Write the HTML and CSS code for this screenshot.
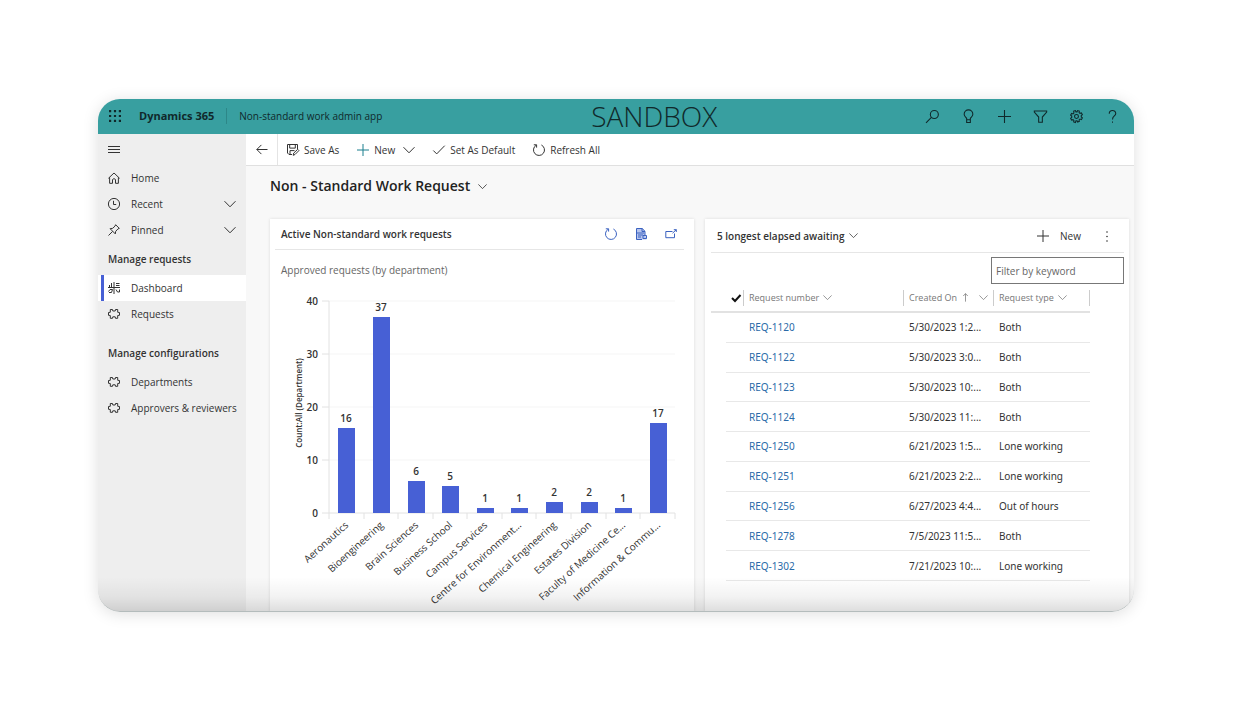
FILE: index.html
```html
<!DOCTYPE html>
<html lang="en">
<head>
    <meta charset="UTF-8">
    <meta name="viewport" content="width=device-width, initial-scale=1.0">
    <title>Non-standard work admin app - Dynamics 365</title>
    <link rel="stylesheet" href="styles.css">
</head>
<body>
    <!-- Shared icons -->
    <svg class="sprite" aria-hidden="true">
        <symbol id="chevron" viewBox="0 0 12 12"><path d="M.5 3.200 6 8.800l5.500-5.600"/></symbol>
        <symbol id="plus" viewBox="0 0 12 12"><path d="M6 0v12M0 6h12"/></symbol>
        <symbol id="refresh" viewBox="0 0 12 12"><path d="M3.200 1.200A5.500 5.500 0 1 0 8.400 1M.8.8h2.800v2.800"/></symbol>
        <symbol id="puzzle" viewBox="0 0 12 12"><path d="M2.300 1.500h2.200L4.800 3h2.400l.3-1.500h2.200v2.800l1.800.2v2.800l-1.800.2v2.800H7.500L7.200 8.800H4.800l-.3 1.500H2.300V7.500L.5 7.300V4.500l1.800-.2z"/></symbol>
    </svg>

    <div class="window">
        <header class="topbar">
            <button class="icon-btn" aria-label="App launcher">
                <svg class="icon solid" viewBox="0 0 12 12"><path d="M0 0h2.200v2.200H0zM4.900 0h2.200v2.200H4.900zM9.800 0H12v2.200H9.800zM0 4.900h2.200v2.200H0zM4.900 4.900h2.200v2.200H4.900zM9.800 4.900H12v2.200H9.800zM0 9.800h2.200V12H0zM4.900 9.800h2.200V12H4.900zM9.800 9.800H12V12H9.800z"/></svg>
            </button>
            <a class="brand" href="#">Dynamics 365</a>
            <a class="app-name" href="#">Non-standard work admin app</a>
            <span class="environment">SANDBOX</span>
            <div class="topbar-actions">
                <button class="icon-btn" aria-label="Search"><svg class="icon" viewBox="0 0 12 12"><circle cx="7.700" cy="4.200" r="3.700"/><path d="M5 6.900 0 11.800"/></svg></button>
                <button class="icon-btn" aria-label="Ideas"><svg class="icon" viewBox="0 0 12 12"><path d="M4.300 9V7.800C3.800 6.500 2 6 2 3.900a4 4 0 0 1 8 0C10 6 8.200 6.500 7.700 7.800V9zM4.300 9v2.500h3.400V9"/></svg></button>
                <button class="icon-btn" aria-label="Add"><svg class="icon"><use href="#plus"/></svg></button>
                <button class="icon-btn" aria-label="Filter"><svg class="icon" viewBox="0 0 12 12"><path d="M.3.900h11.400v1L7.700 6.500v4.800H4.300V6.500L.3 1.900z"/></svg></button>
                <button class="icon-btn" aria-label="Settings"><svg class="icon" viewBox="0 0 12 12"><path d="m5 .5.500 1.200h1L7 .5l1.600.5-.2 1.400.8.700 1.300-.4.900 1.500-1 .9v1.300l1 .9-.9 1.500-1.300-.4-.8.700.2 1.400-1.600.6-.5-1.200h-1L5 11.600 3.400 11l.2-1.400-.8-.7-1.300.4-.9-1.500 1-.9V5.600l-1-.9.900-1.500 1.300.4.800-.7L3.400 1z"/><circle cx="6" cy="6" r="1.800"/></svg></button>
                <button class="icon-btn" aria-label="Help"><svg class="icon" viewBox="0 0 12 12"><path d="M3 3.400C3-.4 9-.4 9 3.200 9 5.600 6 5.500 6 8.700M6 10.500v1.300"/></svg></button>
            </div>
        </header>

        <div class="body">
            <nav class="sidebar">
                <button class="menu-btn" aria-label="Site map"><svg class="icon" viewBox="0 0 12 12"><path d="M0 2.500h12M0 5.500h12M0 8.500h12"/></svg></button>
                <a class="nav-item" href="#"><svg class="icon" viewBox="0 0 12 12"><path d="M.4 6.300 6 1l5.600 5.300M1.600 5.300v6h2.900V7.500q1.500-1.800 3 0v3.800h2.900v-6"/></svg>Home</a>
                <button class="nav-item"><svg class="icon" viewBox="0 0 12 12"><circle cx="6" cy="6" r="5.600"/><path d="M5.500 2.800v3.700h2.700"/></svg>Recent<svg class="icon end"><use href="#chevron"/></svg></button>
                <button class="nav-item"><svg class="icon" viewBox="0 0 12 12"><path d="m7.600.7 3.700 3.700-1.300.5-2.300 2.400-.4 2.600-5.200-5.200 2.600-.4L7.100 2zM4.600 7.400.5 11.500"/></svg>Pinned<svg class="icon end"><use href="#chevron"/></svg></button>

                <h2>Manage requests</h2>
                <a class="nav-item active" href="#"><svg class="icon" viewBox="0 0 12 12"><path d="M6 0v12M0 5.500h12M1.500 5V3M3.500 5V1M8 1.500h3.500M8 3.500h3.500M.5 9.500 2 7.500h2.500l-1 3H1M8 7.500l1.500 2.500h2V7.500"/></svg>Dashboard</a>
                <a class="nav-item" href="#"><svg class="icon"><use href="#puzzle"/></svg>Requests</a>

                <h2 class="spaced">Manage configurations</h2>
                <a class="nav-item" href="#"><svg class="icon"><use href="#puzzle"/></svg>Departments</a>
                <a class="nav-item" href="#"><svg class="icon"><use href="#puzzle"/></svg>Approvers &amp; reviewers</a>
            </nav>

            <main>
                <div class="commands">
                    <button class="back" aria-label="Back"><svg class="icon" viewBox="0 0 12 12"><path d="M11.500 5.500H.8M5.400.9.800 5.500l4.600 4.600"/></svg></button>
                    <button><svg class="icon" viewBox="0 0 12 12"><path d="M5 10.500H2L.5 9V.5h10V5M2.700.5v3.600h5.600V.5M3 10.500V6.600h4.500M6.200 11.300l.5-2.200 4-3.800 1.200 1.300-3.900 3.900z"/></svg>Save As</button>
                    <button><svg class="icon teal"><use href="#plus"/></svg>New<svg class="icon menu"><use href="#chevron"/></svg></button>
                    <button><svg class="icon" viewBox="0 0 12 12"><path d="m.3 6.500 3.400 3.400 8-8.200"/></svg>Set As Default</button>
                    <button><svg class="icon"><use href="#refresh"/></svg>Refresh All</button>
                </div>

                <h1><button class="view-title">Non - Standard Work Request<svg class="icon small"><use href="#chevron"/></svg></button></h1>

                <div class="cards">
                    <section class="card">
                        <div class="card-head">
                            <h3>Active Non-standard work requests</h3>
                            <div class="card-actions">
                                <button class="icon-btn" aria-label="Refresh"><svg class="icon"><use href="#refresh"/></svg></button>
                                <button class="icon-btn" aria-label="View records"><svg class="icon" viewBox="0 0 12 12"><path class="tint" d="M1.500.5h5.700L10 3.300V8l1.500 1v2.500h-10z"/><path d="M7 11.500H1.500V.5h5.700L10 3.300v4M7 .5v3h3M2 5h7M3 7h5M3 9h3M8 7.500h3.500v3H8z"/></svg></button>
                                <button class="icon-btn" aria-label="Expand"><svg class="icon" viewBox="0 0 12 12"><path d="M7.500 3.500H.8v6.200h8.700V5.500M7.500 5.200l3.800-3.500M8.800 1.700h2.500v2.300"/></svg></button>
                            </div>
                        </div>
                        <p class="subtitle">Approved requests (by department)</p>
                        <svg class="chart" viewBox="0 0 424 327" role="img" aria-label="Approved requests by department">
                            <path class="grid" d="M59 16h346M59 69h346M59 122h346M59 175h346"/>
                            <path class="axis" d="M59 16v218M52 16h7M52 69h7M52 122h7M52 175h7M52 228h353M94 228v6M128 228v6M163 228v6M197 228v6M232 228v6M266 228v6M301 228v6M336 228v6M370 228v6M405 228v6"/>
                            <g class="tick-labels">
                                <text x="48" y="20">40</text>
                                <text x="48" y="73">30</text>
                                <text x="48" y="126">20</text>
                                <text x="48" y="179">10</text>
                                <text x="48" y="232">0</text>
                            </g>
                            <text class="axis-title" transform="translate(32 118) rotate(-90)">Count:All (Department)</text>
                            <g id="bars"></g>
                        </svg>
                    </section>

                    <section class="card">
                        <div class="card-head tall">
                            <h3><button class="view-picker">5 longest elapsed awaiting<svg class="icon small"><use href="#chevron"/></svg></button></h3>
                            <div class="card-actions dark">
                                <button class="new-btn"><svg class="icon"><use href="#plus"/></svg>New</button>
                                <button class="icon-btn" aria-label="More commands"><svg class="icon solid" viewBox="0 0 12 12"><circle cx="6" cy="2" r=".8"/><circle cx="6" cy="6.500" r=".8"/><circle cx="6" cy="11" r=".8"/></svg></button>
                            </div>
                        </div>
                        <input class="filter" type="text" placeholder="Filter by keyword" aria-label="Filter by keyword">
                        <table>
                            <colgroup><col class="c-edge"><col class="c-check"><col><col class="c-date"><col class="c-type"></colgroup>
                            <thead>
                                <tr>
                                    <th></th>
                                    <th><button aria-label="Select all"><svg class="icon check" viewBox="0 0 12 12"><path d="m2 6 3 3 5.500-6"/></svg></button></th>
                                    <th class="split"><button>Request number<svg class="icon small"><use href="#chevron"/></svg></button></th>
                                    <th class="split"><button>Created On<svg class="icon small" viewBox="0 0 12 12"><path d="M6 11.500V.8M3 4l3-3.200L9 4"/></svg><svg class="icon small last"><use href="#chevron"/></svg></button></th>
                                    <th class="split right"><button>Request type<svg class="icon small"><use href="#chevron"/></svg></button></th>
                                </tr>
                            </thead>
                            <tbody>
                                <tr><td></td><td></td><td><a href="#">REQ-1120</a></td><td>5/30/2023 1:2...</td><td>Both</td></tr>
                                <tr><td></td><td></td><td><a href="#">REQ-1122</a></td><td>5/30/2023 3:0...</td><td>Both</td></tr>
                                <tr><td></td><td></td><td><a href="#">REQ-1123</a></td><td>5/30/2023 10:...</td><td>Both</td></tr>
                                <tr><td></td><td></td><td><a href="#">REQ-1124</a></td><td>5/30/2023 11:...</td><td>Both</td></tr>
                                <tr><td></td><td></td><td><a href="#">REQ-1250</a></td><td>6/21/2023 1:5...</td><td>Lone working</td></tr>
                                <tr><td></td><td></td><td><a href="#">REQ-1251</a></td><td>6/21/2023 2:2...</td><td>Lone working</td></tr>
                                <tr><td></td><td></td><td><a href="#">REQ-1256</a></td><td>6/27/2023 4:4...</td><td>Out of hours</td></tr>
                                <tr><td></td><td></td><td><a href="#">REQ-1278</a></td><td>7/5/2023 11:5...</td><td>Both</td></tr>
                                <tr><td></td><td></td><td><a href="#">REQ-1302</a></td><td>7/21/2023 10:...</td><td>Lone working</td></tr>
                            </tbody>
                        </table>
                    </section>
                </div>
            </main>
        </div>
    </div>

    <script src="chart.js"></script>
</body>
</html>
```
FILE: styles.css
```css
* {
    margin: 0;
    padding: 0;
    box-sizing: border-box;
}

body {
    background: white;
    padding: 99px 99px 40px 98px;
    font-family: "Open Sans", "Noto Sans", sans-serif;
    font-size: 10px;
    line-height: 16px;
    color: #333;
}

button, input {
    font: inherit;
    color: inherit;
    background: none;
    border: none;
}

button {
    cursor: pointer;
}

a {
    color: inherit;
    text-decoration: none;
}

/* Icons */
.sprite {
    display: none;
}

.icon {
    width: 12px;
    height: 12px;
    flex: none;
    fill: none;
    stroke: currentColor;
    stroke-width: 1;
    overflow: visible;
}

.icon.small {
    width: 9px;
    height: 9px;
}

.icon.solid {
    fill: currentColor;
    stroke: none;
}

.teal {
    color: #1a7f8e;
}

.icon-btn {
    display: flex;
}

/* Window */
.window {
    position: relative;
    border-radius: 22px;
    overflow: hidden;
    background: #f8f8f8;
    box-shadow: 0 2px 16px rgba(0, 0, 0, 0.13);
}

.window::after {
    content: "";
    position: absolute;
    inset: 0;
    border-radius: 22px;
    border-bottom: 1px solid #b4bcbc;
    background: linear-gradient(to top, rgba(0, 0, 0, 0.13), rgba(0, 0, 0, 0.05) 14px, transparent 34px);
    pointer-events: none;
}

.topbar {
    display: flex;
    align-items: center;
    height: 35px;
    padding: 0 15px 1px 11px;
    background: #389fa0;
    color: #10292b;
}

.brand {
    margin-left: 18px;
    padding-right: 12px;
    border-right: 1px solid #2d8788;
    font-size: 11px;
    font-weight: 700;
}

.app-name {
    padding-left: 12px;
}

.environment {
    margin: 0 auto;
    font-size: 28px;
    font-weight: 300;
    line-height: 34px;
}

.topbar-actions {
    display: flex;
    gap: 23px;
}

.topbar-actions .icon {
    width: 13px;
    height: 13px;
}

.body {
    display: flex;
}

/* Sidebar */
.sidebar {
    width: 148px;
    flex: none;
    background: #eee;
}

.menu-btn {
    display: flex;
    padding: 10px 10px 9px;
}

.nav-item {
    display: flex;
    align-items: center;
    gap: 11px;
    width: 100%;
    height: 26px;
    padding: 0 10px;
    white-space: nowrap;
}

.end {
    margin-left: auto;
}

.nav-item.active {
    background: white;
    box-shadow: inset 3px 0 white, inset 6px 0 #4760d5;
}

.sidebar h2 {
    padding: 8px 10px;
    font-size: 10px;
    font-weight: 600;
}

.sidebar .spaced {
    margin-top: 10px;
}

/* Command bar */
main {
    flex: 1;
    min-width: 0;
}

.commands {
    display: flex;
    gap: 18px;
    height: 32px;
    padding-right: 20px;
    background: white;
    border-bottom: 1px solid #e0e0e0;
}

.commands button {
    display: flex;
    align-items: center;
    gap: 5px;
}

.commands .menu {
    margin-left: 3px;
}

.commands .back {
    width: 32px;
    justify-content: center;
    margin-right: -9px;
    border-right: 1px solid #e4e4e4;
}

h1 {
    padding: 9px 24px 22px;
}

.view-title {
    display: flex;
    align-items: center;
    gap: 8px;
    font-size: 14px;
    font-weight: 600;
    line-height: 22px;
    color: #222;
}

/* Cards */
.cards {
    display: grid;
    grid-template-columns: 1fr 1fr;
    gap: 11px;
    padding: 0 5px 0 24px;
}

.card {
    background: white;
    box-shadow: 0 0 3px rgba(0, 0, 0, 0.12);
}

.card-head {
    display: flex;
    align-items: center;
    justify-content: space-between;
    height: 31px;
    margin: 0 10px 0 5px;
    padding: 0 7px 0 6px;
    border-bottom: 1px solid #e6e6e6;
}

.card-head.tall {
    height: 34px;
    margin: 0 5px 0 6px;
    padding: 0 11px 0 6px;
}

h3 {
    font-size: 10px;
    font-weight: 600;
}

.card-actions {
    display: flex;
    align-items: center;
    gap: 18px;
    color: #3b62c0;
}

.card-actions.dark {
    gap: 20px;
    color: #333;
}

.tint {
    fill: #b7c5ee;
    stroke: none;
}

.view-picker,
.new-btn {
    display: flex;
    align-items: center;
    gap: 4px;
}

.new-btn {
    gap: 11px;
}

.subtitle {
    padding: 12px 11px 7px;
    color: #666;
}

/* Chart */
.chart {
    display: block;
    width: 100%;
}

.chart text {
    font-size: 10px;
    font-weight: 600;
    fill: #333;
}

.grid {
    stroke: #f5f5f5;
}

.axis {
    fill: none;
    stroke: #e2e2e2;
}

.tick-labels text {
    text-anchor: end;
}

.chart .axis-title,
.bar-value {
    text-anchor: middle;
}

.chart .axis-title {
    font-size: 8px;
}

.chart .bar-name {
    font-weight: 500;
    text-anchor: end;
}

.bar {
    fill: #4760d5;
}

/* Request grid */
.filter {
    display: block;
    width: 133px;
    height: 27px;
    margin: 4px 5px 0 auto;
    padding: 0 4px;
    border: 1px solid #777;
}

.filter::placeholder {
    color: #666;
    opacity: 1;
}

table {
    width: calc(100% - 45px);
    height: 297px;
    margin-left: 6px;
    table-layout: fixed;
    border-collapse: separate;
    border-spacing: 0;
}

.c-edge {
    width: 15px;
}

.c-check {
    width: 17px;
}

.c-date {
    width: 90px;
}

.c-type {
    width: 97px;
}

thead tr {
    height: 29px;
}

th {
    border-bottom: 2px solid #e2e2e2;
    font-size: 9px;
    font-weight: 400;
    color: #777;
}

th button {
    display: flex;
    align-items: center;
    gap: 4px;
    width: 100%;
    white-space: nowrap;
}

.split button {
    padding-left: 5px;
    border-left: 1px solid #ccc;
}

.right button {
    border-right: 1px solid #ccc;
}

.last {
    margin: 0 5px 0 auto;
}

.icon.check {
    margin-left: 4px;
    color: #111;
    stroke-width: 2;
}

td {
    padding-left: 6px;
    border-bottom: 1px solid #e8e8e8;
    font-family: "Noto Sans", "Open Sans", sans-serif;
    white-space: nowrap;
}

td:first-child {
    border-bottom: none;
}

td a {
    color: #2a6aa8;
}
```
FILE: chart.js
```js
const departments = [
    ['Aeronautics', 16],
    ['Bioengineering', 37],
    ['Brain Sciences', 6],
    ['Business School', 5],
    ['Campus Services', 1],
    ['Centre for Environment...', 1],
    ['Chemical Engineering', 2],
    ['Estates Division', 2],
    ['Faculty of Medicine Ce...', 1],
    ['Information & Commu...', 17]
];

const baseline = 228;
const unit = 5.3;
const step = 34.6;

function addShape(tag, attrs, text) {
    const el = document.createElementNS('http://www.w3.org/2000/svg', tag);
    for (const name in attrs) {
        el.setAttribute(name, attrs[name]);
    }
    if (text !== undefined) {
        el.textContent = text;
    }
    document.getElementById('bars').appendChild(el);
}

departments.forEach(([name, count], i) => {
    const center = Math.round(59 + step * (i + 0.5));
    const height = Math.round(count * unit);
    addShape('rect', { class: 'bar', x: center - 8, y: baseline - height, width: 17, height: height });
    addShape('text', { class: 'bar-value', x: center, y: baseline - height - 6 }, count);
    addShape('text', { class: 'bar-name', transform: `translate(${center + 3} 241) rotate(-42)` }, name);
});
```
